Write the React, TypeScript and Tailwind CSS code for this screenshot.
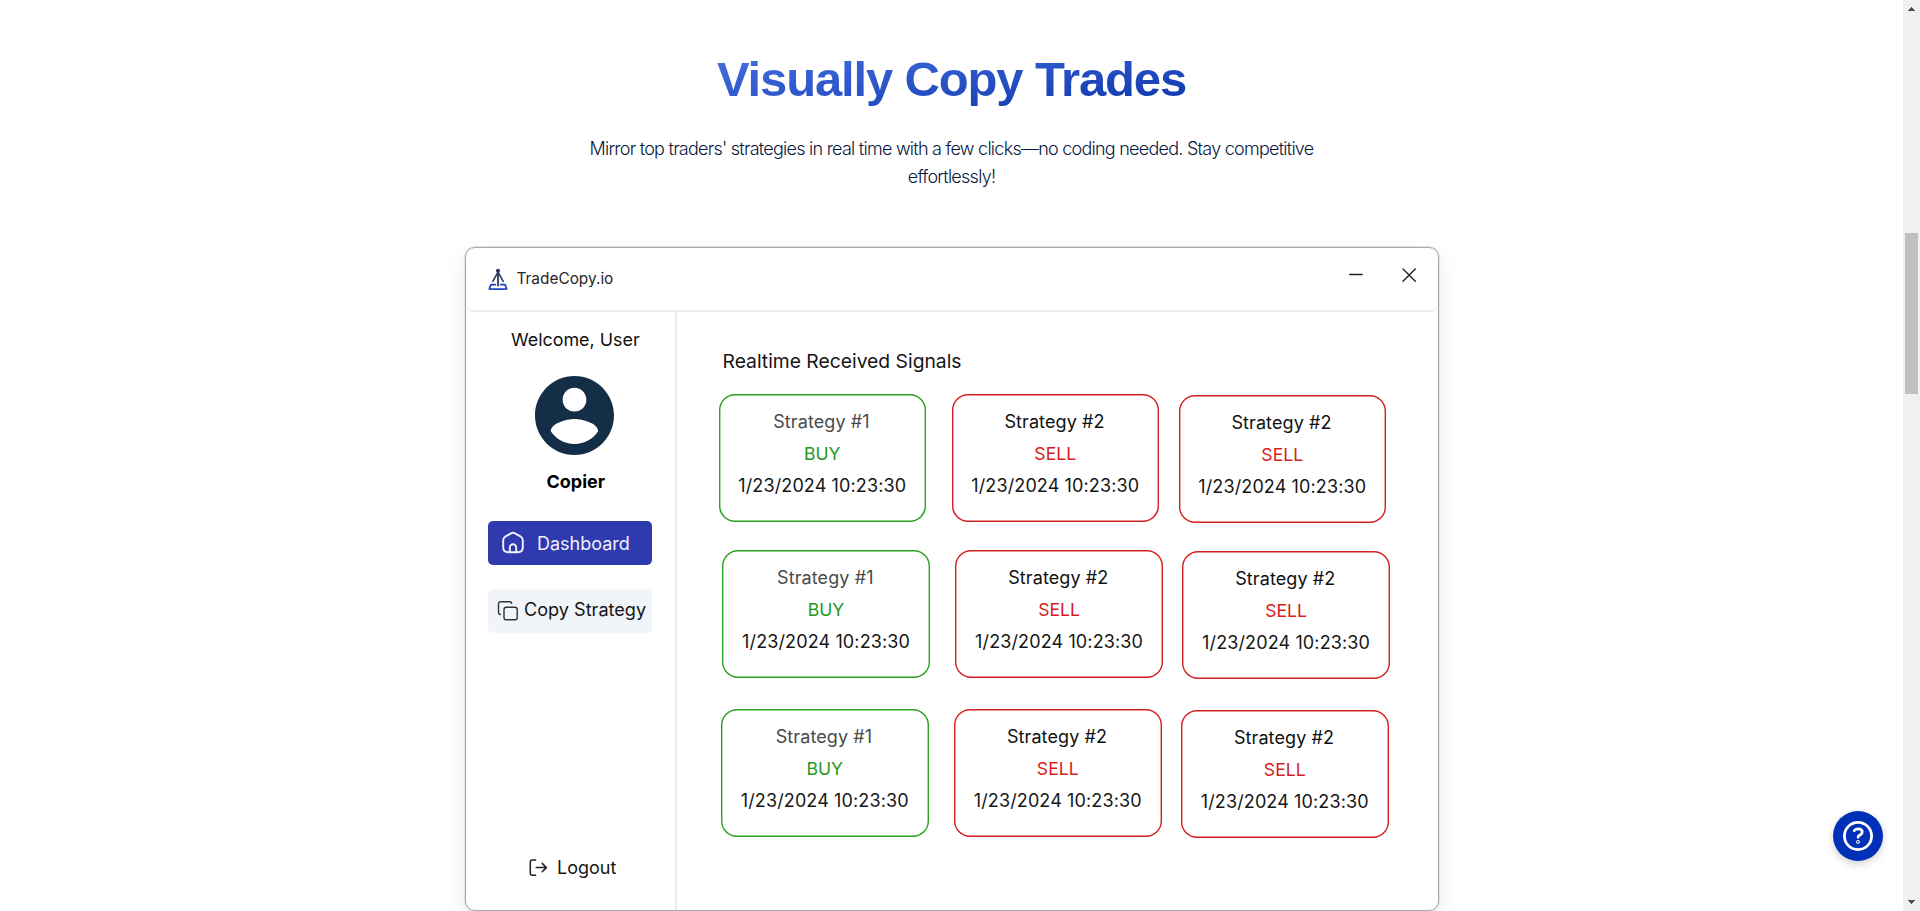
type Signal = { name: string; side: "BUY" | "SELL"; time: string };

const buy: Signal = { name: "Strategy #1", side: "BUY", time: "1/23/2024 10:23:30" };
const sell: Signal = { name: "Strategy #2", side: "SELL", time: "1/23/2024 10:23:30" };

const rows: { className: string; signals: Signal[] }[] = [
  { className: "ml-[42px] mt-[17px]", signals: [buy, sell, sell] },
  { className: "ml-[45.8px] mt-[27px]", signals: [buy, sell, sell] },
  { className: "ml-[44.5px] mt-[29.8px]", signals: [buy, sell, sell] },
];

const cardSpacing = ["", "ml-[25.5px]", "ml-[19.5px] mt-[1px]"];

function SignalCard({ signal, className }: { signal: Signal; className: string }) {
  const isBuy = signal.side === "BUY";
  return (
    <div
      className={`flex h-[128px] w-[207.5px] flex-col items-center rounded-[16px] pt-[12px] text-[18px] leading-8 ${
        isBuy ? "shadow-[inset_0_0_0_1.4px_#2aa11f]" : "shadow-[inset_0_0_0_1.4px_#d3201f]"
      } ${className}`}
    >
      <span className={isBuy ? "mr-[1.5px] tracking-[0.1px] text-[#4a4a4a]" : "mr-[1.5px] tracking-[0.1px] text-[#111]"}>
        {signal.name}
      </span>
      <span className={isBuy ? "text-[17.6px] text-[#24991a]" : "text-[17.6px] text-[#d61c1c]"}>{signal.side}</span>
      <span className="tracking-[0.12px] text-[#161616]">{signal.time}</span>
    </div>
  );
}

function Logo() {
  return (
    <svg width="20" height="23" viewBox="0 0 20 23" fill="none" strokeLinecap="round" strokeLinejoin="round">
      <g stroke="#27375f" strokeWidth="1.6">
        <path d="M10 3v14.5" strokeWidth="1.8" />
        <path d="M9.6 4.8 4.8 13.4M10.4 4.8 15.2 13.4" />
        <circle cx="10" cy="2.7" r="1.4" fill="#27375f" strokeWidth="1.2" />
      </g>
      <path d="M7.4 16.6H3L1.3 20.6c-.1.4.1.6.5.6h16.4c.4 0 .6-.2.5-.6L17 16.6h-4.4" stroke="#1f45bd" strokeWidth="1.7" />
    </svg>
  );
}

function TitleBar() {
  return (
    <header className="flex h-[64px] shrink-0 justify-between rounded-b-[8px] border-b-2 border-[#ececec] pr-[21px] pl-[22px]">
      <div className="flex h-[60px] items-center gap-[9px] pt-[2px]">
        <Logo />
        <span className="text-[15.4px] text-[#262626]">TradeCopy.io</span>
      </div>
      <div className="mt-[19px] flex h-[16px] items-center gap-[37px] text-[#222]">
        <svg width="16" height="16" viewBox="0 0 16 16" stroke="currentColor" strokeWidth="1.4" strokeLinecap="round">
          <path d="M1.7 7.5h12.4" />
        </svg>
        <svg width="16" height="16" viewBox="0 0 16 16" stroke="currentColor" strokeWidth="1.4" strokeLinecap="round">
          <path d="m2 2 12.3 12.3M14.3 2 2 14.3" />
        </svg>
      </div>
    </header>
  );
}

function Sidebar() {
  return (
    <aside className="flex w-[211px] shrink-0 flex-col border-r-2 border-[#eaeaea] pt-[12px] pl-[22.5px]">
      <div className="ml-[23px] text-[17.9px] leading-8 text-[#111]">Welcome, User</div>
      <svg className="mt-[20px] ml-[47px]" width="79" height="79" viewBox="2 2 20 20" fill="#142e47">
        <path d="M12 2C6.48 2 2 6.48 2 12s4.48 10 10 10 10-4.48 10-10S17.52 2 12 2zm0 3c1.66 0 3 1.34 3 3s-1.34 3-3 3-3-1.34-3-3 1.34-3 3-3zm0 14.2c-2.5 0-4.71-1.28-6-3.22.03-1.99 4-3.08 6-3.08 1.99 0 5.97 1.09 6 3.08-1.29 1.94-3.5 3.22-6 3.22z" />
      </svg>
      <div className="mt-[11px] ml-[58.5px] text-[18px] leading-8 font-bold text-black">Copier</div>
      <nav className="mt-[23.4px] flex w-[164px] flex-col gap-[23.4px] text-[18px]">
        <a className="flex h-[44px] items-center rounded-[5px] bg-[#2f3aae] pl-[13px] text-[#eef0fb]">
          <svg width="24" height="24" viewBox="0 0 24 24" fill="none" stroke="currentColor" strokeWidth="1.9" strokeLinecap="round" strokeLinejoin="round">
            <path d="M10 2.4 4.6 5.4C3 6.3 2.2 7.5 2.2 9.3v6.9c0 3.3 1.7 5 5 5h9.6c3.3 0 5-1.7 5-5V9.3c0-1.8-.8-3-2.4-3.9L14 2.4c-1.4-.8-2.6-.8-4 0Z" />
            <path d="M8.8 21v-4.6a3.2 3.2 0 0 1 6.4 0V21" />
          </svg>
          <span className="ml-[12px]">Dashboard</span>
        </a>
        <a className="flex h-[44px] items-center rounded-[5px] bg-[#f1f4f9] pl-[9px] text-[#161616]">
          <svg width="22" height="22" viewBox="0 0 22 22" fill="none" stroke="#333" strokeWidth="1.4" strokeLinecap="round" strokeLinejoin="round">
            <rect x="7" y="7.2" width="13.2" height="12.6" rx="2.2" />
            <path d="M3.3 14.5A1.9 1.9 0 0 1 1.5 12.6V3.9A2.2 2.2 0 0 1 3.7 1.7h9a2 2 0 0 1 2 1.7" />
          </svg>
          <span className="-mt-[3px] ml-[5px] text-[18.1px]">Copy Strategy</span>
        </a>
      </nav>
      <div className="mt-auto mb-[26px] ml-[41px] flex items-center gap-[9px] text-[18px] leading-8 text-[#161616]">
        <svg width="19" height="19" viewBox="0 0 19 19" fill="none" stroke="#222" strokeWidth="1.5" strokeLinecap="round" strokeLinejoin="round">
          <path d="M6.6.9H3.3c-1.3 0-2 .7-2 2v11.4c0 1.3.7 2 2 2h3.3M7.2 8.6h10M13.2 4.4l4.2 4.2-4.2 4.2" />
        </svg>
        <span>Logout</span>
      </div>
    </aside>
  );
}

function Scrollbar() {
  return (
    <div className="flex w-[17px] shrink-0 flex-col items-center justify-between bg-[#f0f0f0]">
      <svg width="17" height="17" viewBox="0 0 17 17" fill="#505050" shapeRendering="crispEdges">
        <path d="M8 7h1v1h1v1h1v1h1v1H5v-1h1V9h1V8h1z" />
      </svg>
      <div className="mt-[216px] h-[161px] w-[13px] bg-[#c1c1c1]" />
      <svg className="mt-auto" width="17" height="17" viewBox="0 0 17 17" fill="#505050" shapeRendering="crispEdges">
        <path d="M5 6h7v1h-1v1h-1v1H9v1H8V9H7V8H6V7H5z" />
      </svg>
    </div>
  );
}

export default function App() {
  return (
    <div className="flex h-[911px] w-full overflow-hidden bg-white font-['Inter',sans-serif]">
      <main className="flex min-w-0 flex-1 flex-col items-center">
        <h1 className="mt-[47px] bg-gradient-to-br from-[#4a73e4] to-[#0a32aa] bg-clip-text font-['Liberation_Sans',sans-serif] text-[49px] leading-[64px] font-bold tracking-[-1.15px] text-transparent">
          Visually Copy Trades
        </h1>
        <p className="mt-[24px] w-[768px] text-center text-[18px] leading-7 font-light tracking-[-0.75px] text-[#0a1740]">
          Mirror top traders' strategies in real time with a few clicks—no coding needed. Stay competitive effortlessly!
        </p>
        <section className="mt-[56px] flex h-[664px] w-[974px] shrink-0 flex-col rounded-[10px] border border-[#a5aab1] bg-white shadow-[0_0_0_1px_#dfe4ea,0_10px_24px_rgba(0,0,0,0.09)]">
          <TitleBar />
          <div className="flex min-h-0 flex-1">
            <Sidebar />
            <div className="flex flex-1 flex-col pt-[33px]">
              <h2 className="ml-[46px] text-[19.3px] leading-8 text-[#161616]">Realtime Received Signals</h2>
              {rows.map((row, r) => (
                <div key={r} className={`flex items-start ${row.className}`}>
                  {row.signals.map((signal, c) => (
                    <SignalCard key={c} signal={signal} className={cardSpacing[c]} />
                  ))}
                </div>
              ))}
            </div>
          </div>
        </section>
      </main>
      <Scrollbar />
      <button
        aria-label="Help"
        className="fixed right-[37px] bottom-[50px] flex size-[50px] items-center justify-center rounded-full bg-[#0030b5] shadow-[0_3px_8px_rgba(0,0,0,0.18)]"
      >
        <svg width="32" height="32" viewBox="0 0 32 32" fill="none" stroke="white" strokeWidth="2.8" strokeLinecap="round" strokeLinejoin="round">
          <circle cx="16" cy="16" r="13.6" />
          <path d="M12.2 10.7c1-1.2 2.3-1.8 4-1.8 2.5 0 4 1.2 4 3.1 0 1.9-1.5 2.6-2.8 3.3-.9.5-1.3.9-1.3 2" />
          <circle cx="16" cy="21.9" r=".5" />
        </svg>
      </button>
    </div>
  );
}
